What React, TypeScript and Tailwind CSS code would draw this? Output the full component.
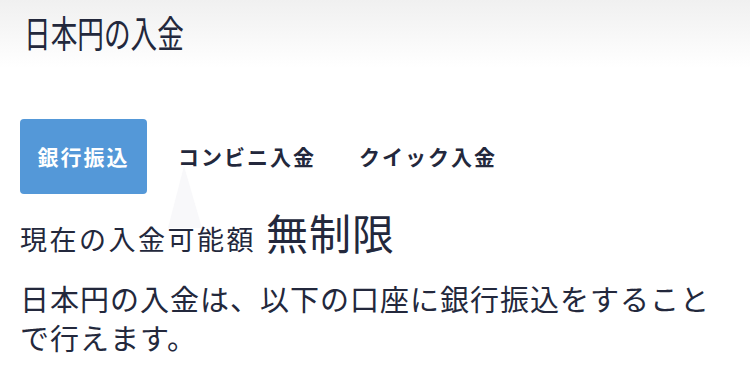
export default function App() {
  const font = "font-['Noto_Sans_CJK_JP','Noto_Sans',sans-serif]";
  return (
    <main className={`relative w-[750px] h-[391px] overflow-hidden bg-white text-[#23283c] ${font}`}>
      <header className="h-[68px] bg-gradient-to-b from-[#f0f0f0] to-white px-[24px] pt-[8px]">
        <h1 className="origin-left scale-x-[0.72] text-[37px] leading-[48px] whitespace-nowrap">日本円の入金</h1>
      </header>

      <svg className="absolute left-[168px] top-[166px]" width="34" height="62" viewBox="0 0 34 62">
        <polygon points="16,0 0,62 34,62" fill="#f8f8fa" />
      </svg>

      <section className="relative px-[20px] pt-[51px]">
        <nav className="flex items-center">
          <button className="h-[75px] w-[127px] rounded-[4px] bg-[#5498d8] text-[21px] font-bold tracking-[2px] text-white">
            銀行振込
          </button>
          <button className="ml-[31px] text-[21px] font-bold tracking-[2px]">コンビニ入金</button>
          <button className="ml-[43px] text-[21px] font-bold tracking-[2px]">クイック入金</button>
        </nav>

        <div className="mt-[14px] flex items-baseline">
          <span className="text-[27px] tracking-[2.5px]">現在の入金可能額</span>
          <span className="ml-[10px] text-[42px] leading-[48px] tracking-[1px]">無制限</span>
        </div>

        <p className="mt-[19px] w-[700px] text-[29px] leading-[39px] tracking-[1px]">
          日本円の入金は、以下の口座に銀行振込をすることで行えます。
        </p>
      </section>
    </main>
  );
}
